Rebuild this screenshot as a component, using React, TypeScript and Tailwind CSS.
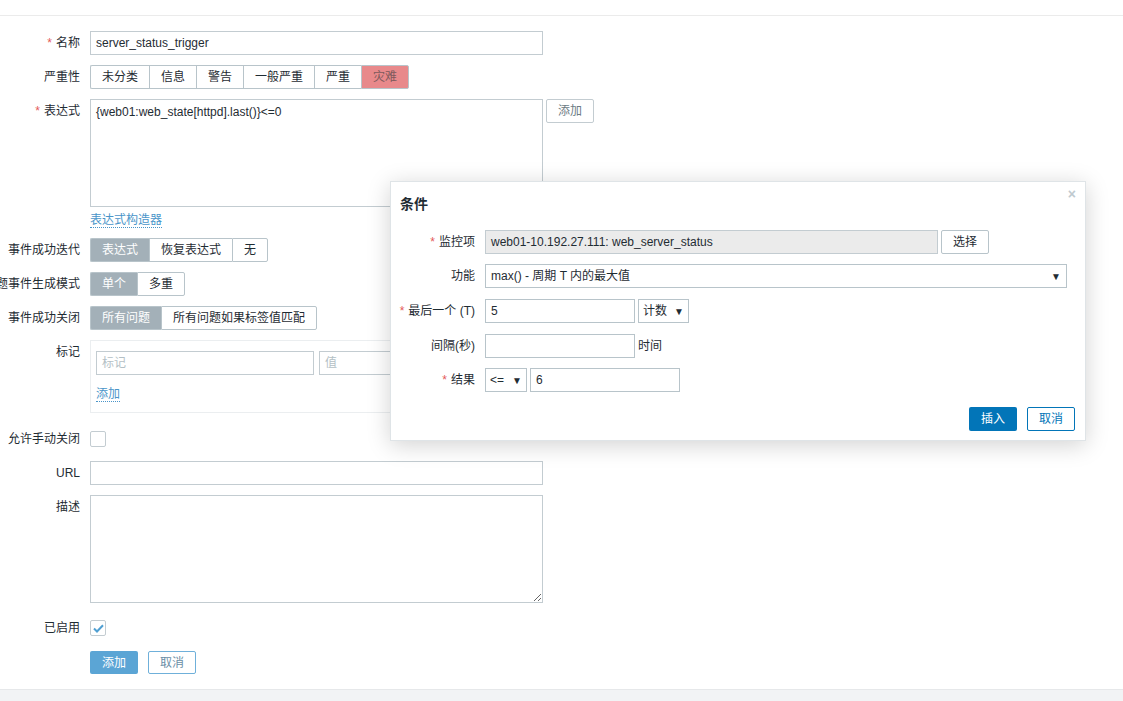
import { ReactNode } from "react";

const font = { fontFamily: '"Liberation Sans", "Noto Sans CJK SC", sans-serif' };

function Row({ label, required, children, className }: { label: string; required?: boolean; children: ReactNode; className?: string }) {
  return (
    <div className={"flex " + (className || "")}>
      <div className="w-[80px] shrink-0 flex justify-end h-[24px] items-center whitespace-nowrap">
        {required && <span className="text-[#e45959] mr-[4px]">*</span>}
        <span>{label}</span>
      </div>
      <div className="ml-[10px] flex-1">{children}</div>
    </div>
  );
}

function Segmented({ items, active, danger }: { items: string[]; active: number; danger?: boolean }) {
  return (
    <div className="flex h-[24px]">
      {items.map((item, i) => {
        const on = i === active;
        const bg = on ? (danger ? "bg-[#e8898b] text-[#7d5a5c]" : "bg-[#a3b0b8] text-white") : "bg-white text-[#1f2c33]";
        return (
          <div
            key={item}
            className={
              "flex items-center px-[11px] border-y border-[#b8c4ca] " +
              (i === 0 ? "border-l rounded-l-[2px] " : "border-l ") +
              (i === items.length - 1 ? "border-r rounded-r-[2px] " : "") +
              bg
            }
          >
            {item}
          </div>
        );
      })}
    </div>
  );
}

function Checkbox({ checked }: { checked?: boolean }) {
  return (
    <div className="w-[16px] h-[16px] border border-[#c3ccd1] rounded-[2px] bg-white flex items-center justify-center">
      {checked && (
        <svg width="11" height="9" viewBox="0 0 11 9">
          <path d="M1 4.5 L4 7.5 L10 1.2" fill="none" stroke="#4f9fd2" strokeWidth="2" />
        </svg>
      )}
    </div>
  );
}

function Modal() {
  const mrow = "flex h-[24px] items-center";
  const mlabel = "w-[75px] shrink-0 flex justify-end whitespace-nowrap";
  return (
    <div className="absolute left-[390px] top-[181px] w-[696px] h-[260px] bg-white border border-[#dfe4e7] shadow-[0_4px_22px_rgba(0,0,0,0.18)]">
      <div className="absolute right-[9px] top-[5px] text-[#c0cad0] text-[14px] font-bold leading-none">×</div>
      <div className="pl-[9px] pt-[12px] text-[14px] font-bold text-[#1f2c33] leading-[20px]">条件</div>
      <div className="pl-[9px] pt-[16px] flex flex-col gap-[10px]">
        <div className={mrow}>
          <div className={mlabel}><span className="text-[#e45959] mr-[4px]">*</span>监控项</div>
          <div className="ml-[10px] w-[453px] h-[24px] border border-[#c3ccd1] bg-[#ebebeb] px-[5px] flex items-center">web01-10.192.27.111: web_server_status</div>
          <div className="ml-[3px] w-[48px] h-[24px] border border-[#b8c4ca] rounded-[2px] flex items-center justify-center">选择</div>
        </div>
        <div className={mrow}>
          <div className={mlabel}>功能</div>
          <div className="ml-[10px] w-[582px] h-[24px] border border-[#b8c4ca] px-[5px] flex items-center justify-between">
            <span>max() - 周期 T 内的最大值</span>
            <span className="text-[10px]">▼</span>
          </div>
        </div>
        <div className={mrow + " mt-[1px]"}>
          <div className={mlabel}><span className="text-[#e45959] mr-[4px]">*</span>最后一个 (T)</div>
          <div className="ml-[10px] w-[150px] h-[24px] border border-[#b8c4ca] px-[5px] flex items-center">5</div>
          <div className="ml-[3px] w-[51px] h-[24px] border border-[#b8c4ca] px-[4px] flex items-center justify-between">
            <span>计数</span>
            <span className="text-[10px]">▼</span>
          </div>
        </div>
        <div className={mrow + " mt-[1px]"}>
          <div className={mlabel}>间隔(秒)</div>
          <div className="ml-[10px] w-[150px] h-[24px] border border-[#b8c4ca]" />
          <div className="ml-[3px]">时间</div>
        </div>
        <div className={mrow}>
          <div className={mlabel}><span className="text-[#e45959] mr-[4px]">*</span>结果</div>
          <div className="ml-[10px] w-[42px] h-[24px] border border-[#b8c4ca] px-[4px] flex items-center justify-between">
            <span>&lt;=</span>
            <span className="text-[10px]">▼</span>
          </div>
          <div className="ml-[3px] w-[150px] h-[24px] border border-[#b8c4ca] px-[5px] flex items-center">6</div>
        </div>
      </div>
      <div className="absolute right-[10px] top-[225px] flex gap-[10px]">
        <div className="w-[48px] h-[24px] rounded-[2px] bg-[#0275b8] text-white flex items-center justify-center">插入</div>
        <div className="w-[48px] h-[24px] rounded-[2px] border border-[#0275b8] text-[#0275b8] flex items-center justify-center">取消</div>
      </div>
    </div>
  );
}

export default function App() {
  const input = "w-[453px] h-[24px] border border-[#c3ccd1] bg-white px-[5px] flex items-center";
  return (
    <div style={font} className="relative w-[1123px] h-[701px] overflow-hidden bg-white text-[12px] text-[#1f2c33]">
      <div className="h-[16px] border-b border-[#ebebeb]" />
      <div className="pt-[15px] flex flex-col">
        <Row label="名称" required>
          <div className={input}>server_status_trigger</div>
        </Row>
        <Row label="严重性" className="mt-[10px]">
          <Segmented items={["未分类", "信息", "警告", "一般严重", "严重", "灾难"]} active={5} danger />
        </Row>
        <Row label="表达式" required className="mt-[10px]">
          <div className="flex items-start">
            <textarea
              readOnly
              defaultValue="{web01:web_state[httpd].last()}<=0"
              className="w-[453px] h-[108px] border border-[#c3ccd1] px-[5px] py-[3px] outline-none resize-none"
            />
            <div className="ml-[3px] w-[48px] h-[24px] border border-[#c3ccd1] rounded-[2px] text-[#6c7b84] flex items-center justify-center">添加</div>
          </div>
          <div className="mt-[3px] h-[20px] flex items-center">
            <span className="text-[#4a95c9] border-b border-dotted border-[#4a95c9] leading-[14px]">表达式构造器</span>
          </div>
        </Row>
        <Row label="事件成功迭代" className="mt-[8px]">
          <Segmented items={["表达式", "恢复表达式", "无"]} active={0} />
        </Row>
        <Row label="问题事件生成模式" className="mt-[10px]">
          <Segmented items={["单个", "多重"]} active={0} />
        </Row>
        <Row label="事件成功关闭" className="mt-[10px]">
          <Segmented items={["所有问题", "所有问题如果标签值匹配"]} active={0} />
        </Row>
        <Row label="标记" className="mt-[10px]">
          <div className="w-[453px] h-[73px] border border-[#ebeef0] px-[5px] pt-[10px]">
            <div className="flex gap-[5px]">
              <div className="w-[218px] h-[24px] border border-[#c3ccd1] px-[5px] flex items-center text-[#b4bfc5]">标记</div>
              <div className="w-[218px] h-[24px] border border-[#c3ccd1] px-[5px] flex items-center text-[#b4bfc5]">值</div>
            </div>
            <div className="mt-[9px] h-[20px] flex items-center">
              <span className="text-[#4a95c9] border-b border-dotted border-[#4a95c9] leading-[14px]">添加</span>
            </div>
          </div>
        </Row>
        <Row label="允许手动关闭" className="mt-[14px]">
          <div className="h-[24px] flex items-center">
            <Checkbox />
          </div>
        </Row>
        <Row label="URL" className="mt-[10px]">
          <div className={input} />
        </Row>
        <Row label="描述" className="mt-[10px]">
          <textarea readOnly className="w-[453px] h-[108px] border border-[#c3ccd1] outline-none block" />
        </Row>
        <Row label="已启用" className="mt-[13px]">
          <div className="h-[24px] flex items-center">
            <Checkbox checked />
          </div>
        </Row>
        <div className="mt-[11px] ml-[90px] flex gap-[10px]">
          <div className="w-[48px] h-[23px] rounded-[2px] bg-[#5ba5d5] text-white flex items-center justify-center">添加</div>
          <div className="w-[48px] h-[23px] rounded-[2px] border border-[#6fb0da] text-[#6a8ea6] flex items-center justify-center">取消</div>
        </div>
      </div>
      <div className="absolute left-0 right-0 bottom-0 h-[12px] bg-[#f2f3f5] border-t border-[#e6e8ea]" />
      <Modal />
    </div>
  );
}
